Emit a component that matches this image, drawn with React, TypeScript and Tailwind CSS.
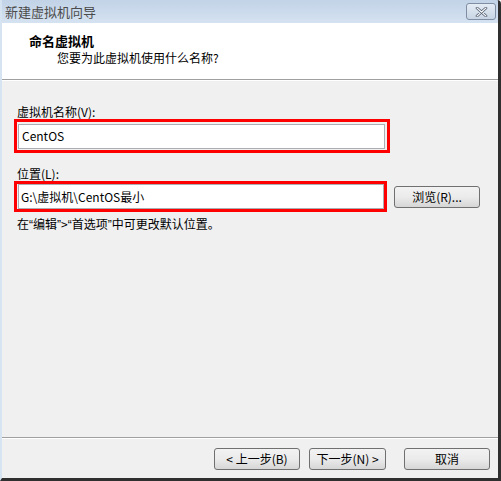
import React from 'react'

const font = { fontFamily: '"Noto Sans CJK SC", "Noto Sans", sans-serif' }

function CloseButton() {
  return (
    <div className="w-[30px] h-[17px] rounded-[3px] border border-[#7f8ea3] bg-gradient-to-b from-[#e4ecf5] to-[#c8d5e4] flex items-center justify-center">
      <svg width="13" height="10" viewBox="0 0 13 10">
        <path d="M2 1 L11 9 M11 1 L2 9" stroke="#4a5566" strokeWidth="2.6" strokeLinecap="round" />
        <path d="M2 1 L11 9 M11 1 L2 9" stroke="#f4f6f9" strokeWidth="1.2" strokeLinecap="round" />
      </svg>
    </div>
  )
}

function WinButton({ label, className = '' }: { label: string; className?: string }) {
  return (
    <button
      className={`h-[22px] rounded-[3px] border border-[#707070] bg-gradient-to-b from-[#f2f2f2] via-[#ebebeb] to-[#d6d6d6] text-[12px] text-black flex items-center justify-center leading-none ${className}`}
    >
      {label}
    </button>
  )
}

// narrow quote marks, like the original UI font
function Q({ c }: { c: string }) {
  return <span className="font-['Liberation_Sans',sans-serif]">{c}</span>
}

export default function App() {
  return (
    <div
      className="w-[501px] h-[481px] flex flex-col bg-[#f0f0f0] border-l-2 border-l-[#d6e3f1] border-r-[3px] border-r-[#2f2f2f] border-b-[3px] border-b-[#2f2f2f] rounded-tr-[4px] overflow-hidden"
      style={font}
    >
      {/* Title bar */}
      <div className="h-[23px] shrink-0 flex items-center justify-between pl-[3px] pr-[2px] bg-gradient-to-b from-[#c2d3e7] to-[#d5e2f1]">
        <span className="text-[13px] text-[#4b4b4b]">新建虚拟机向导</span>
        <CloseButton />
      </div>

      {/* Header */}
      <div className="h-[57px] shrink-0 bg-white pl-[27px] pt-[9px] border-b border-b-[#a0a0a0]">
        <div className="text-[13px] font-bold text-black leading-[18px]">命名虚拟机</div>
        <div className="text-[12px] text-black leading-[16px] pl-[28px]">您要为此虚拟机使用什么名称?</div>
      </div>
      <div className="h-px shrink-0 bg-white" />

      {/* Body */}
      <div className="flex-1 flex flex-col pl-[12px] pt-[24px]">
        <div className="text-[12px] text-black leading-[14px] pl-[3px]">虚拟机名称(V):</div>
        <div className="w-[376px] h-[34px] border-[3px] border-[#ff0000] flex items-center pl-[1px]">
          <div className="w-[367px] h-[25px] bg-white border border-[#abadb3] flex items-center pl-[3px] text-[12px] text-black">
            CentOS
          </div>
        </div>

        <div className="mt-[14px] text-[12px] text-black leading-[14px] pl-[3px]">位置(L):</div>
        <div className="flex items-center">
          <div className="w-[373px] h-[31px] border-[3px] border-[#ff0000] flex items-center pl-[1px]">
            <div className="w-[367px] h-[25px] bg-white border border-[#abadb3] flex items-center pl-[2px] text-[12px] text-black">
              G:\虚拟机\CentOS最小
            </div>
          </div>
          <WinButton label="浏览(R)..." className="ml-[7px] w-[86px] border-[#3c7fb1] from-[#eaf6fd] via-[#d9f0fc] to-[#bee6fd]" />
        </div>
        <div className="mt-[4px] text-[12px] text-black leading-[16px] pl-[3px]">
          在<Q c="“" />编辑<Q c="”" />&gt;<Q c="“" />首选项<Q c="”" />中可更改默认位置。
        </div>
      </div>

      {/* Footer */}
      <div className="shrink-0 border-t border-t-[#a0a0a0]">
        <div className="h-px bg-white" />
        <div className="h-[39px] flex items-start pt-[9px] pl-[212px]">
          <WinButton label="< 上一步(B)" className="w-[86px]" />
          <WinButton label="下一步(N) >" className="ml-[9px] w-[77px]" />
          <WinButton label="取消" className="ml-[18px] w-[86px]" />
        </div>
      </div>
    </div>
  )
}
